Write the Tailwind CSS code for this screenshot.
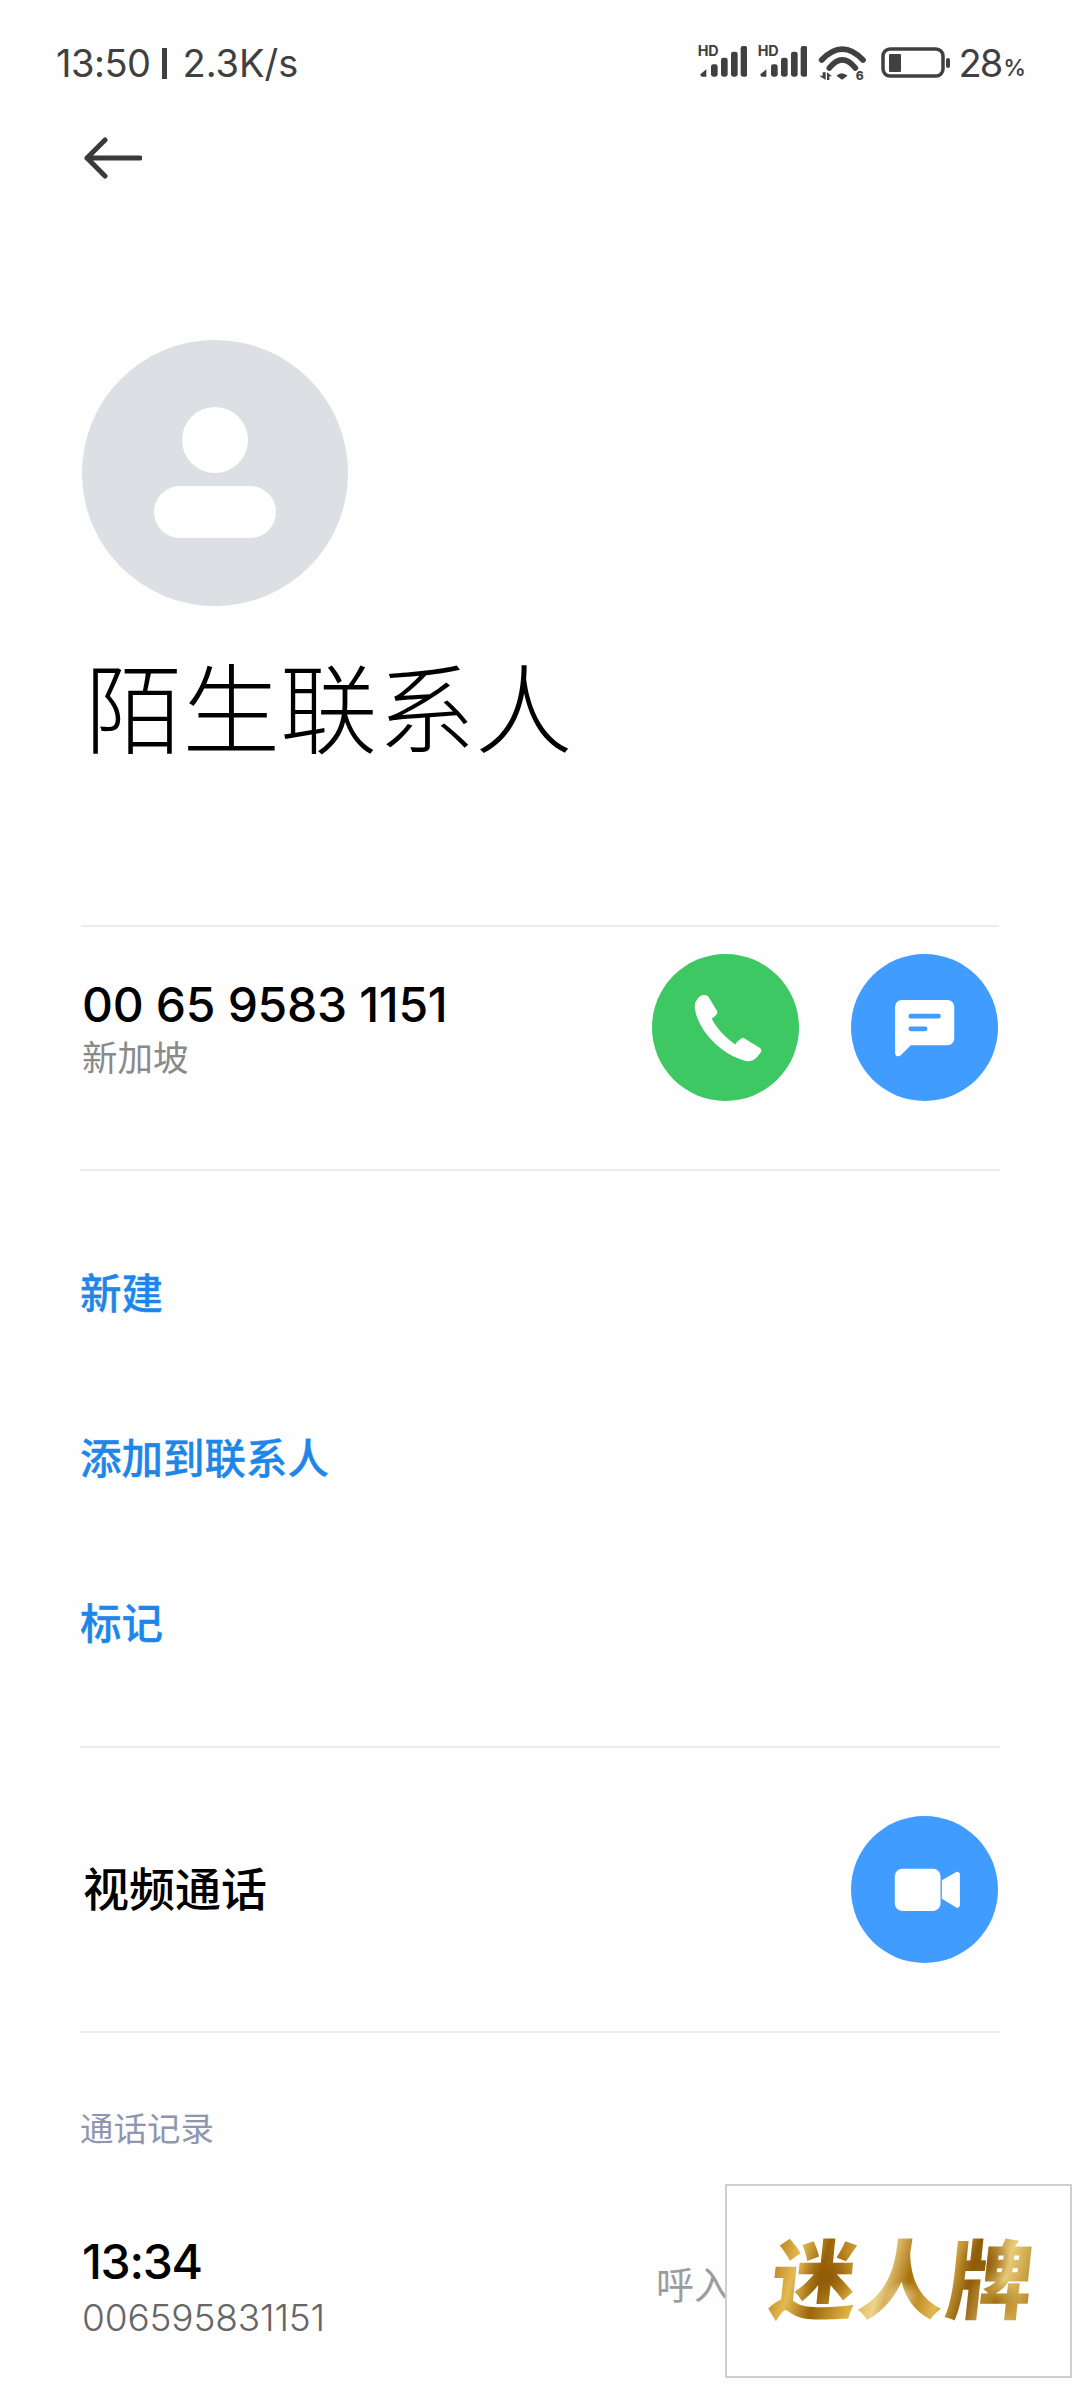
<!DOCTYPE html>
<html lang="zh-CN">
<head>
  <meta charset="UTF-8" />
  <meta name="viewport" content="width=device-width, initial-scale=1" />
  <title>陌生联系人</title>
  <script src="https://cdn.jsdelivr.net/npm/@tailwindcss/browser@4"></script>
</head>
<body class="bg-white">
  <div class="relative w-[1080px] h-[2400px] overflow-hidden bg-[#fefefe] font-['Inter','Noto_Sans_CJK_SC',sans-serif]">

    <!-- status bar -->
    <div class="h-[126px] pl-[56px] pr-[55px] flex items-center justify-between text-[#404040]">
      <div class="flex items-center text-[38px] leading-none">
        <span class="tracking-[-0.5px]">13:50</span>
        <span class="ml-[12px] w-[5px] h-[31px] bg-[#404040]"></span>
        <span class="ml-[15px]">2.3K/s</span>
      </div>
      <div class="flex items-center">
        <svg class="w-[50px] h-[48px]" viewBox="55 64 150 144">
          <text x="57" y="115" font-size="43" font-weight="700" font-family="Inter" fill="#404040">HD</text>
          <path d="M65 170 L83 155 V177 H70 Q65 177 65 170Z" fill="#404040"/>
          <rect x="97" y="140" width="20" height="37" rx="7" fill="#404040"/>
          <rect x="127" y="120" width="20" height="57" rx="7" fill="#404040"/>
          <rect x="157" y="102" width="20" height="75" rx="7" fill="#404040"/>
          <rect x="186" y="85" width="20" height="92" rx="7" fill="#404040"/>
        </svg>
        <svg class="w-[50px] h-[48px] ml-[10px]" viewBox="55 64 150 144">
          <text x="57" y="115" font-size="43" font-weight="700" font-family="Inter" fill="#404040">HD</text>
          <path d="M65 170 L83 155 V177 H70 Q65 177 65 170Z" fill="#404040"/>
          <rect x="97" y="140" width="20" height="37" rx="7" fill="#404040"/>
          <rect x="127" y="120" width="20" height="57" rx="7" fill="#404040"/>
          <rect x="157" y="102" width="20" height="75" rx="7" fill="#404040"/>
          <rect x="186" y="85" width="20" height="92" rx="7" fill="#404040"/>
        </svg>
        <svg class="w-[48px] h-[48px] ml-[11px]" viewBox="422 60 144 144">
          <path d="M433 123 Q495 58 557 123" fill="none" stroke="#404040" stroke-width="17" stroke-linecap="round"/>
          <path d="M456 147 Q495 98 534 147" fill="none" stroke="#404040" stroke-width="17" stroke-linecap="round"/>
          <path d="M477 170 Q493 155 511 170 L494 182Z" fill="#404040"/>
          <path d="M426 170 H436 V160 L445 160 V183 Z M449 183 V160 L464 172 H456 V183Z" fill="#404040"/>
          <text x="535" y="184" font-size="36" font-weight="800" font-family="Inter" fill="#404040">6</text>
        </svg>
        <svg class="w-[70px] h-[32px] ml-[15px]" viewBox="0 0 70 32">
          <rect x="2" y="2" width="60" height="27" rx="7" fill="none" stroke="#404040" stroke-width="3.5"/>
          <rect x="8" y="7" width="12" height="18" rx="1" fill="#404040"/>
          <rect x="65" y="11" width="4" height="10" rx="2" fill="#404040"/>
        </svg>
        <span class="ml-[7px] text-[38px] leading-none tracking-[-2px]">28</span>
        <span class="ml-[2px] text-[23px] leading-none mt-[11px] font-medium tracking-[-1px]">%</span>
      </div>
    </div>

    <!-- back -->
    <div class="h-[64px] pl-[84px] flex items-center">
      <svg class="w-[58px] h-[42px]" viewBox="0 0 58 42" fill="none" stroke="#3a3a3a" stroke-width="5" stroke-linecap="round" stroke-linejoin="round">
        <path d="M56 21 H3 M21 3 L3 21 L21 39"/>
      </svg>
    </div>

    <!-- avatar -->
    <div class="mt-[150px] ml-[82px] w-[266px] h-[266px] rounded-full bg-[#dcdfe4] flex flex-col items-center">
      <div class="mt-[67px] w-[66px] h-[66px] rounded-full bg-white"></div>
      <div class="mt-[13px] w-[122px] h-[52px] rounded-full bg-white"></div>
    </div>

    <div class="mt-[47px] h-[117px] pl-[85px] flex items-center text-[97.5px] leading-none font-light text-black">陌生联系人</div>

    <!-- number row -->
    <div class="mt-[155px] mx-[81px] border-t-2 border-[#ececec]"></div>
    <div class="h-[242px] pl-[82px] pr-[82px] pt-[27px] flex justify-between">
      <div class="pt-[19px]">
        <div class="text-[48px] leading-[64px] font-medium text-black tracking-[-0.3px]">00 65 9583 1151</div>
        <div class="text-[35.5px] leading-[44px] text-[#8a8a8a]">新加坡</div>
      </div>
      <div class="flex gap-[52px]">
        <svg class="w-[147px] h-[147px]" viewBox="97 72 440 440">
          <circle cx="317" cy="292" r="220" fill="#3ec864"/>
          <path d="M232 208 C240 193 258 192 266 200 L292 243 C294 250 290 254 276 266 C290 295 320 325 346 343 C352 335 362 325 370 323 L418 352 C428 358 425 365 418 372 C405 390 395 395 378 392 C310 375 240 310 226 240 C223 225 226 215 232 208Z" fill="#fff"/>
        </svg>
        <svg class="w-[147px] h-[147px]" viewBox="693 72 440 440">
          <circle cx="913" cy="292" r="220" fill="#409cff"/>
          <path d="M845 210 H982 a20 20 0 0 1 20 20 V325 a20 20 0 0 1 -20 20 H872 L842 375 C835 381 825 378 825 368 V230 a20 20 0 0 1 20 -20Z" fill="#fff"/>
          <path d="M872 258 H955 M872 296 H915" stroke="#409cff" stroke-width="14" stroke-linecap="round"/>
        </svg>
      </div>
    </div>

    <!-- actions -->
    <div class="mx-[80px] border-t-2 border-[#ececec]"></div>
    <div class="pt-[41px] pb-[39px] pl-[80px] text-[41.5px] font-medium text-[#1e86e8] [-webkit-text-stroke:0.3px_#1e86e8]">
      <div class="h-[165px] flex items-center">新建</div>
      <div class="h-[165px] flex items-center">添加到联系人</div>
      <div class="h-[165px] flex items-center">标记</div>
    </div>

    <!-- video -->
    <div class="mx-[80px] border-t-2 border-[#ececec]"></div>
    <div class="h-[283px] pl-[83px] pr-[82px] flex items-center justify-between">
      <span class="text-[46px] font-medium text-black">视频通话</span>
      <svg class="w-[147px] h-[147px]" viewBox="94 48 440 440">
        <circle cx="314" cy="268" r="220" fill="#409cff"/>
        <rect x="225" y="206" width="137" height="126" rx="22" fill="#fff"/>
        <path d="M366 240 L408 216 C415 213 420 218 420 224 V314 C420 321 414 325 408 321 L366 296Z" fill="#fff"/>
      </svg>
    </div>

    <!-- call log -->
    <div class="mx-[80px] border-t-2 border-[#ececec]"></div>
    <div class="mt-[75px] pl-[80px] text-[33.5px] leading-[42px] text-[#8f96ad]">通话记录</div>
    <div class="mt-[81px] pl-[82px]">
      <div class="text-[48px] leading-[62px] font-medium text-black tracking-[-1.3px]">13:34</div>
      <div class="text-[37px] leading-[50px] font-light text-[#666666] tracking-[-0.15px]">006595831151</div>
    </div>
    <span class="absolute left-[656px] top-[2262px] text-[38px] leading-[46px] text-[#9c9c9c]">呼入</span>

    <!-- watermark -->
    <div class="absolute left-[725px] top-[2184px] w-[347px] h-[194px] border-2 border-[#cfcfcf] bg-white flex items-center justify-center">
      <span class="inline-block ml-[8px] -skew-x-6 text-[86px] leading-none font-black tracking-[2px] text-transparent bg-clip-text bg-[radial-gradient(circle_at_22%_45%,#8f5a06_0%,transparent_14%),radial-gradient(circle_at_50%_70%,#f3dfa0_0%,transparent_12%),radial-gradient(circle_at_80%_30%,#8f5a06_0%,transparent_12%),radial-gradient(circle_at_86%_75%,#a06c0c_0%,transparent_10%),linear-gradient(100deg,#b57a10_0%,#e3bb52_10%,#9a6408_20%,#d9a93c_32%,#eed389_42%,#a8700c_52%,#e2b850_64%,#8f5c08_74%,#e8cc78_86%,#b07a14_100%)]">迷人牌</span>
    </div>
  </div>
</body>
</html>
